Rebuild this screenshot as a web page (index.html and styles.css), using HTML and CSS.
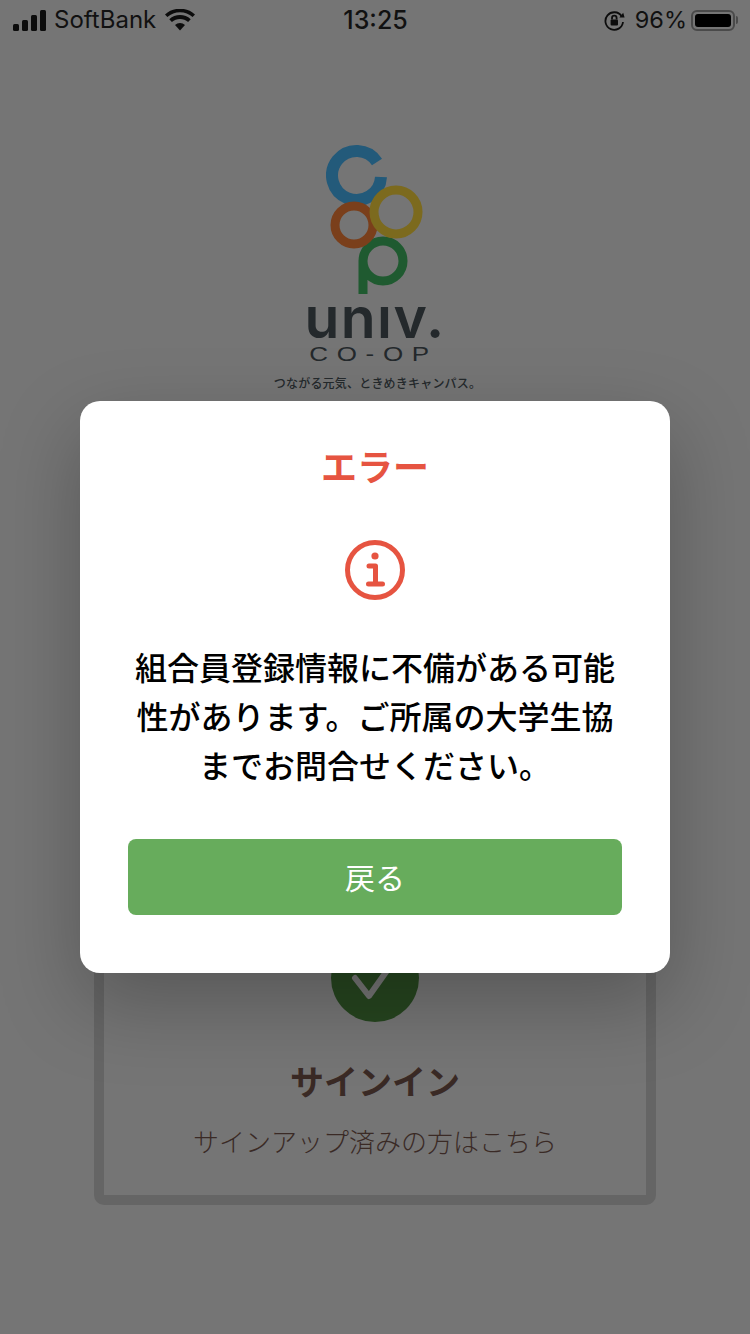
FILE: index.html
```html
<!DOCTYPE html>
<html lang="ja">

<head>
    <meta charset="UTF-8">
    <meta name="viewport" content="width=device-width, initial-scale=1.0">
    <title>エラー</title>
    <link rel="stylesheet" href="styles.css">
</head>

<body>
    <!-- Status Bar -->
    <div class="status-bar">
        <div class="status-left">
            <svg class="signal" width="33" height="21" viewBox="0 0 33 21">
                <rect x="0" y="14" width="6" height="7" rx="1.5" />
                <rect x="9" y="10" width="6" height="11" rx="1.5" />
                <rect x="18" y="5" width="6" height="16" rx="1.5" />
                <rect x="27" y="0" width="6" height="21" rx="1.5" />
            </svg>
            <span class="carrier">SoftBank</span>
            <svg class="wifi" width="30" height="22" viewBox="0 0 30 22">
                <path d="M15 21.5l-5-5.6a7.4 7.4 0 0 1 10 0z" />
                <path d="M6.9 13.1l-2.6-2.9a16 16 0 0 1 21.4 0l-2.6 2.9a12 12 0 0 0-16.2 0z" />
                <path d="M2.4 8.1L0 5.4a22.6 22.6 0 0 1 30 0l-2.4 2.7a19 19 0 0 0-25.2 0z" />
            </svg>
        </div>
        <div class="status-time">13:25</div>
        <div class="status-right">
            <svg class="rotation-lock" width="21" height="21" viewBox="0 0 21 21">
                <path class="rotation-ring" d="M17.6 6.200A8.800 8.800 0 1 0 19 12" />
                <path d="M15.400 7.600l5.200-.2-1.400-4.600z" />
                <rect x="6.600" y="9.400" width="7.400" height="6" rx="1" />
                <path class="rotation-shackle" d="M8 9.600V8a2.300 2.300 0 0 1 4.600 0v1.600" />
            </svg>
            <span class="battery-text">96%</span>
            <div class="battery">
                <div class="battery-level"></div>
            </div>
            <div class="battery-nub"></div>
        </div>
    </div>

    <!-- Logo -->
    <div class="logo">
        <svg class="logo-mark" width="100" height="152" viewBox="0 0 100 152">
            <path class="ring ring-blue" d="M51 18A24.500 24.500 0 1 0 55 33" />
            <path class="ring ring-green" d="M37 150V117A20 20 0 1 1 57 137A20 20 0 0 1 37 117" />
            <circle class="ring ring-brown" cx="28" cy="81" r="19" />
            <circle class="ring ring-yellow" cx="70" cy="68" r="22" />
        </svg>
        <div class="logo-word">unıv.</div>
        <div class="logo-coop">CO-OP</div>
        <div class="logo-tagline">つながる元気、ときめきキャンパス。</div>
    </div>

    <!-- Sign In Card -->
    <div class="signin-card">
        <div class="check-circle">
            <svg width="60" height="50" viewBox="0 0 60 50">
                <path d="M10 25l14 18 22-31" />
            </svg>
        </div>
        <div class="signin-title">サインイン</div>
        <div class="signin-text">サインアップ済みの方はこちら</div>
    </div>

    <!-- Error Dialog -->
    <div class="overlay">
        <div class="dialog">
            <div class="dialog-title">エラー</div>
            <svg class="dialog-icon" width="60" height="60" viewBox="0 0 60 60">
                <circle class="icon-ring" cx="30" cy="30" r="27.500" />
                <circle class="icon-dot" cx="30" cy="16" r="3.600" />
                <path class="icon-stem" d="M24 26h6.500v18M23.500 44h14" />
            </svg>
            <p class="dialog-message">組合員登録情報に不備がある可能性があります。ご所属の大学生協までお問合せください。</p>
            <button class="dialog-button" type="button">戻る</button>
        </div>
    </div>
</body>

</html>
```

FILE: styles.css
```css
/* Global Styles */
* {
    box-sizing: border-box;
}

body {
    font-family: "Noto Sans CJK JP", "Noto Sans", sans-serif;
    margin: 0;
    height: 1334px;
    position: relative;
    overflow: hidden;
    background-color: #757575;
    color: #3a2a25;
}

/* Status Bar */
.status-bar {
    position: relative;
    z-index: 2;
    height: 40px;
    padding: 9px 12px 0 13px;
    display: flex;
    justify-content: space-between;
    align-items: flex-start;
    font-family: Inter, Roboto, sans-serif;
    font-size: 24px;
    line-height: 22px;
    color: #111;
}

.status-left,
.status-right {
    width: 240px;
    display: flex;
    align-items: center;
}

.status-right {
    justify-content: flex-end;
}

.status-bar svg {
    fill: #0c0c0c;
    flex: none;
}

.carrier {
    margin-left: 8px;
    font-size: 24px;
    font-weight: 400;
}

.wifi {
    margin-left: 9px;
}

.status-time {
    font-weight: 500;
    font-size: 25px;
}

.rotation-ring,
.rotation-shackle {
    fill: none;
    stroke: #0c0c0c;
    stroke-width: 1.8;
}

.battery-text {
    margin-left: 10px;
    font-size: 23.500px;
}

.battery {
    width: 44px;
    height: 21px;
    margin-left: 4px;
    padding: 2px;
    border: 2px solid #4a4a4a;
    border-radius: 6px;
}

.battery-level {
    height: 100%;
    border-radius: 3px;
    background-color: #000;
}

.battery-nub {
    width: 2px;
    height: 8px;
    margin-left: 1px;
    border-radius: 0 2px 2px 0;
    background-color: #4a4a4a;
}

/* Logo */
.logo {
    margin-top: 104px;
    display: flex;
    flex-direction: column;
    align-items: center;
    color: #24292c;
}

.logo-mark {
    display: block;
    margin-left: 2px;
}

.ring {
    fill: none;
    stroke-width: 9;
}

.ring-blue {
    stroke: #235a7a;
    stroke-width: 12;
}

.ring-green {
    stroke: #1f5a30;
}

.ring-brown {
    stroke: #7a3f1b;
}

.ring-yellow {
    stroke: #7c6a1e;
}

.logo-word {
    margin-top: -1px;
    font-family: Inter, sans-serif;
    font-size: 57px;
    font-weight: 600;
    line-height: 46px;
    height: 46px;
    letter-spacing: 1.400px;
}

.logo-coop {
    margin-top: 2px;
    margin-left: -3px;
    font-family: "Liberation Sans", sans-serif;
    font-size: 20px;
    line-height: 22px;
    letter-spacing: 6.700px;
    transform: scaleX(1.3);
}

.logo-tagline {
    margin-top: 9px;
    margin-left: 5px;
    font-size: 12px;
    font-weight: 500;
    line-height: 18px;
    letter-spacing: 0.200px;
    white-space: nowrap;
}

/* Sign In Card */
.signin-card {
    height: 324px;
    margin: 489px 94px 0;
    border: 10px solid #656565;
    border-radius: 10px;
    display: flex;
    flex-direction: column;
    align-items: center;
}

.check-circle {
    width: 88px;
    height: 88px;
    margin-top: 43px;
    border-radius: 50%;
    background-color: #26451f;
    display: flex;
    align-items: center;
    justify-content: center;
}

.check-circle svg {
    fill: none;
    stroke: #757575;
    stroke-width: 6;
    stroke-linecap: round;
    stroke-linejoin: round;
}

.signin-title {
    margin-top: 35px;
    font-size: 34px;
    font-weight: 700;
    line-height: 48px;
}

.signin-text {
    margin-top: 18px;
    font-size: 26px;
    font-weight: 300;
    line-height: 36px;
}

/* Error Dialog */
.overlay {
    position: absolute;
    top: 0;
    left: 0;
    width: 100%;
    height: 100%;
    padding-top: 40px;
    z-index: 1;
    display: flex;
    align-items: center;
    justify-content: center;
}

.dialog {
    width: 590px;
    height: 572px;
    padding: 38px 48px 0;
    background-color: #fff;
    border-radius: 20px;
    box-shadow: 0 30px 80px rgba(0, 0, 0, 0.25);
    display: flex;
    flex-direction: column;
    align-items: center;
}

.dialog-title {
    font-size: 36px;
    font-weight: 700;
    line-height: 52px;
    color: #e65441;
}

.dialog-icon {
    margin-top: 49px;
    fill: none;
    stroke: #e65441;
    flex: none;
}

.icon-ring {
    stroke-width: 5;
}

.icon-dot {
    fill: #e65441;
    stroke: none;
}

.icon-stem {
    stroke-width: 5;
    stroke-linecap: round;
    stroke-linejoin: round;
}

.dialog-message {
    margin: 42px 0 0;
    width: 100%;
    font-size: 32px;
    font-weight: 500;
    line-height: 49px;
    text-align: center;
    color: #000;
}

.dialog-button {
    width: 100%;
    height: 76px;
    margin-top: 50px;
    padding: 0 0 3px;
    flex: none;
    border: none;
    border-radius: 8px;
    background-color: #67ac5c;
    color: #fff;
    font-family: inherit;
    font-size: 30px;
    font-weight: 400;
}
```
